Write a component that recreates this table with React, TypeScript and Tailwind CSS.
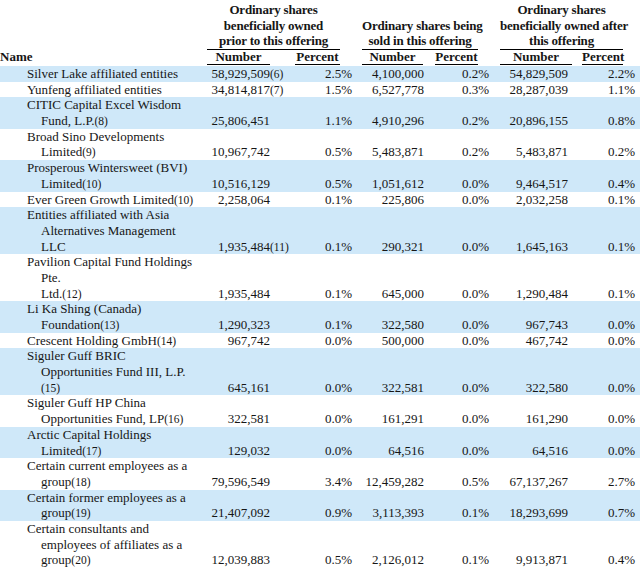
type Row = {
  name: string[];
  fn?: string;
  n1: string;
  p1: string;
  n2: string;
  p2: string;
  n3: string;
  p3: string;
};

const rows: Row[] = [
  { name: ['Silver Lake affiliated entities'], fn: '(6)', n1: '58,929,509', p1: '2.5%', n2: '4,100,000', p2: '0.2%', n3: '54,829,509', p3: '2.2%' },
  { name: ['Yunfeng affiliated entities'], fn: '(7)', n1: '34,814,817', p1: '1.5%', n2: '6,527,778', p2: '0.3%', n3: '28,287,039', p3: '1.1%' },
  { name: ['CITIC Capital Excel Wisdom', 'Fund, L.P.|(8)'], n1: '25,806,451', p1: '1.1%', n2: '4,910,296', p2: '0.2%', n3: '20,896,155', p3: '0.8%' },
  { name: ['Broad Sino Developments', 'Limited|(9)'], n1: '10,967,742', p1: '0.5%', n2: '5,483,871', p2: '0.2%', n3: '5,483,871', p3: '0.2%' },
  { name: ['Prosperous Wintersweet (BVI)', 'Limited|(10)'], n1: '10,516,129', p1: '0.5%', n2: '1,051,612', p2: '0.0%', n3: '9,464,517', p3: '0.4%' },
  { name: ['Ever Green Growth Limited|(10)'], n1: '2,258,064', p1: '0.1%', n2: '225,806', p2: '0.0%', n3: '2,032,258', p3: '0.1%' },
  { name: ['Entities affiliated with Asia', 'Alternatives Management', 'LLC'], fn: '(11)', n1: '1,935,484', p1: '0.1%', n2: '290,321', p2: '0.0%', n3: '1,645,163', p3: '0.1%' },
  { name: ['Pavilion Capital Fund Holdings', 'Pte.', 'Ltd.|(12)'], n1: '1,935,484', p1: '0.1%', n2: '645,000', p2: '0.0%', n3: '1,290,484', p3: '0.1%' },
  { name: ['Li Ka Shing (Canada)', 'Foundation|(13)'], n1: '1,290,323', p1: '0.1%', n2: '322,580', p2: '0.0%', n3: '967,743', p3: '0.0%' },
  { name: ['Crescent Holding GmbH|(14)'], n1: '967,742', p1: '0.0%', n2: '500,000', p2: '0.0%', n3: '467,742', p3: '0.0%' },
  { name: ['Siguler Guff BRIC', 'Opportunities Fund III, L.P.', '|(15)'], n1: '645,161', p1: '0.0%', n2: '322,581', p2: '0.0%', n3: '322,580', p3: '0.0%' },
  { name: ['Siguler Guff HP China', 'Opportunities Fund, LP|(16)'], n1: '322,581', p1: '0.0%', n2: '161,291', p2: '0.0%', n3: '161,290', p3: '0.0%' },
  { name: ['Arctic Capital Holdings', 'Limited|(17)'], n1: '129,032', p1: '0.0%', n2: '64,516', p2: '0.0%', n3: '64,516', p3: '0.0%' },
  { name: ['Certain current employees as a', 'group|(18)'], n1: '79,596,549', p1: '3.4%', n2: '12,459,282', p2: '0.5%', n3: '67,137,267', p3: '2.7%' },
  { name: ['Certain former employees as a', 'group|(19)'], n1: '21,407,092', p1: '0.9%', n2: '3,113,393', p2: '0.1%', n3: '18,293,699', p3: '0.7%' },
  { name: ['Certain consultants and', 'employees of affiliates as a', 'group|(20)'], n1: '12,039,883', p1: '0.5%', n2: '2,126,012', p2: '0.1%', n3: '9,913,871', p3: '0.4%' },
];

function NameLine({ text }: { text: string }) {
  const [main, note] = text.split('|');
  return (
    <>
      {main}
      {note && <span className="text-[11.5px] leading-none">{note}</span>}
    </>
  );
}

export default function App() {
  return (
    <div
      className="w-[640px] h-[571px] overflow-hidden bg-white text-[#161616] text-[13px]"
      style={{ fontFamily: '"Liberation Serif", "Times New Roman", serif' }}
    >
      {/* group headings */}
      <div className="flex items-end h-[50px] font-bold leading-[15.7px] text-center whitespace-nowrap tracking-[-0.2px]">
        <div className="w-[207px]" />
        <div className="w-[133px] border-b border-black">
          Ordinary shares
          <br />
          beneficially owned
          <br />
          prior to this offering
        </div>
        <div className="w-[22px]" />
        <div className="w-[116px] border-b border-black">
          Ordinary shares being
          <br />
          sold in this offering
        </div>
        <div className="w-[22px]" />
        <div className="w-[123px] border-b border-black">
          Ordinary shares
          <br />
          beneficially owned after
          <br />
          this offering
        </div>
      </div>

      {/* column headings */}
      <div className="flex h-[15px] font-bold leading-[14px] text-center whitespace-nowrap">
        <div className="w-[207px] text-left">Name</div>
        <div className="w-[63px] border-b border-black">Number</div>
        <div className="w-[25px]" />
        <div className="w-[45px] border-b border-black">Percent</div>
        <div className="w-[22px]" />
        <div className="w-[61px] border-b border-black">Number</div>
        <div className="w-[12px]" />
        <div className="w-[43px] border-b border-black">Percent</div>
        <div className="w-[22px]" />
        <div className="w-[72px] border-b border-black">Number</div>
        <div className="w-[10px]" />
        <div className="w-[41px] border-b border-black">Percent</div>
      </div>

      <div className="mt-[1px] leading-[15.7px]">
        {rows.map((r, i) => (
          <div
            key={i}
            className={`flex items-end ${i % 2 === 0 ? 'bg-[#cfe8f9]' : 'bg-white'}`}
          >
            <div className="w-[207px] whitespace-nowrap">
              {r.name.map((line, j) => (
                <div key={j} className={`h-[15.7px] ${j === 0 ? 'pl-[27px]' : 'pl-[41px]'}`}>
                  <NameLine text={line} />
                </div>
              ))}
            </div>
            <div className="w-[63px] h-[15.7px] text-right whitespace-nowrap">{r.n1}</div>
            <div className="w-[20px] h-[15.7px] whitespace-nowrap">
              {r.fn && <span className="text-[11.5px] leading-none">{r.fn}</span>}
            </div>
            <div className="w-[62px] h-[15.7px] text-right">{r.p1}</div>
            <div className="w-[10px]" />
            <div className="w-[62px] h-[15.7px] text-right">{r.n2}</div>
            <div className="w-[65px] h-[15.7px] text-right">{r.p2}</div>
            <div className="w-[11px]" />
            <div className="w-[68px] h-[15.7px] text-right">{r.n3}</div>
            <div className="w-[67px] h-[15.7px] text-right">{r.p3}</div>
            <div className="flex-1" />
          </div>
        ))}
      </div>
    </div>
  );
}
